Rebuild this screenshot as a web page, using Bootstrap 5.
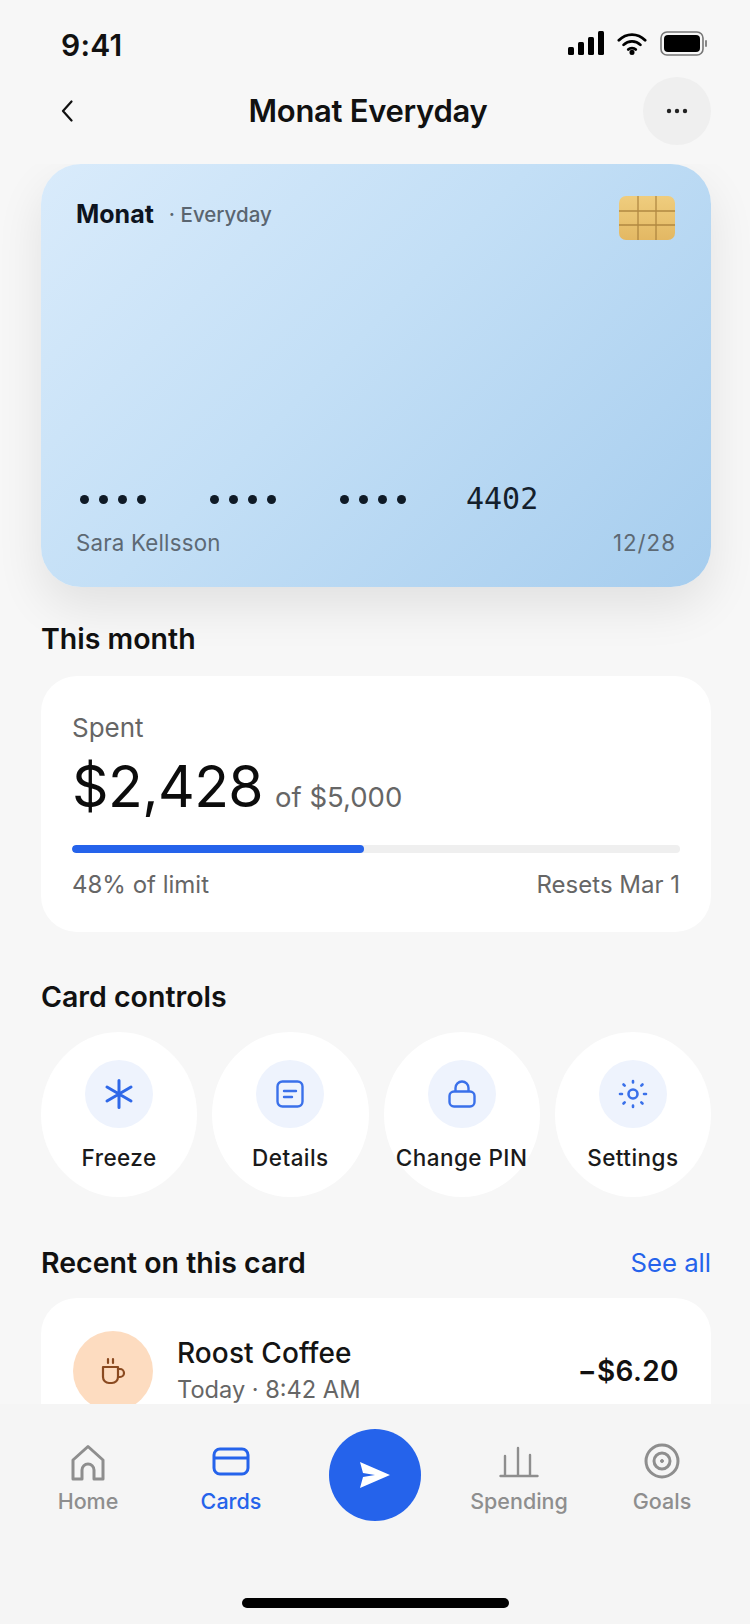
<!DOCTYPE html>
<html lang="en">
<head>
<meta charset="utf-8">
<title>Monat Everyday</title>
<link href="https://cdn.jsdelivr.net/npm/bootstrap@5.3.0/dist/css/bootstrap.min.css" rel="stylesheet">
<style>
html,body{height:100%;margin:0}
body{background:#f7f7f7;font-family:Inter,"Liberation Sans",sans-serif;color:#111;overflow:hidden}
.phone{width:750px;height:1624px;overflow:hidden}
.statusbar{height:77px;padding:29px 42px 0 61px;align-items:flex-start;flex:none}
.clock{font-size:30px;font-weight:600;line-height:32px;letter-spacing:.2px}
.statusicons{gap:13px;height:28px}
.topnav{height:68px;padding:0 39px 0 61px;margin-bottom:19px;flex:none}
.navtitle{font-size:31px;font-weight:600;letter-spacing:-.3px;line-height:40px;left:0;right:14px;text-align:center}
.morebtn{width:68px;height:68px;background:#efefef;z-index:1}
.content{flex:1 1 auto;min-height:0;overflow:hidden;padding:0 39px 0 41px}
.paycard{height:423px;border-radius:40px;background:linear-gradient(135deg,#d9ebfb 0%,#c3dff6 45%,#a6cdee 100%);box-shadow:0 20px 48px rgba(0,0,0,.09);padding:32px 36px 30px 35px;border:0}
.brandrow{height:38px}
.brand{font-size:25px;font-weight:700;color:#0d1420}
.brandsub{font-size:20.5px;color:#5a6570;margin-left:15px;font-weight:500}
.cardnum{font-family:"DejaVu Sans Mono","Liberation Mono",monospace;font-size:30px;line-height:36px;color:#14202c}
.dotset{gap:10px;width:130px}
.dotset.firstset{margin-left:4px}
.dotset.lastset{width:126px}
.dotset i{width:9px;height:9px;background:#0f1a26;border-radius:50%;display:block}
.cardmeta{font-size:22.3px;color:#5d6974;margin-top:12px;line-height:28px;letter-spacing:.2px}
.expiry{letter-spacing:1px;margin-right:-1px}
.sectionhead{font-size:28.5px;font-weight:600;line-height:34px;margin:0}
.whitecard{background:#fff;border:0;border-radius:36px}
.spentcard{padding:37px 31px 32px;height:256px;margin-top:20px}
.spentlabel{font-size:26px;color:#666;line-height:30px}
.bigamount{font-size:57px;line-height:70px;font-weight:400;color:#0c0c0c;letter-spacing:-.6px;margin-top:9px}
.ofamount{font-size:27.5px;color:#666;margin-left:12px}
.limitbar{height:10px;background:#efefef;border-radius:5px;margin-top:23px}
.limitbar .progress-bar{background:#2563eb;border-radius:5px}
.limitmeta{font-size:24px;color:#666;line-height:30px;margin-top:17px}
.ctrlrow{gap:15px;margin-top:18px}
.ctrl{flex:1 1 0;height:165px;background:#fff;border-radius:50%;padding-top:28px}
.ctrlicon{width:68px;height:68px;background:#eef3fd}
.ctrllabel{font-size:22.5px;font-weight:500;line-height:28px;margin-top:16px;color:#1a1a1a;white-space:nowrap;letter-spacing:.45px}
.seeall{font-size:25.7px;color:#2563eb;text-decoration:none;line-height:34px}
.txcard{padding:33px 32px 32px 32px;margin-top:18px;border-radius:36px}
.txicon{width:80px;height:80px;background:#fddcc0;flex:none}
.txtext{margin-left:24px;padding-bottom:2px}
.txname{font-size:28px;font-weight:500;line-height:36px;color:#141414;letter-spacing:.1px}
.txtime{font-size:23.6px;color:#666;line-height:32px;margin-top:3px}
.txamount{font-size:28px;font-weight:600;color:#111;letter-spacing:.4px}
.tabbar{height:220px;background:#f5f5f5;flex:none;padding-top:25px}
.tabrow{padding:0 30px;height:92px}
.tabitem{width:116px;height:92px;padding-top:14px;color:#8e8e8e;font-size:21.5px;font-weight:500;line-height:26px;text-decoration:none}
.tabitem.current{color:#2563eb}
.tabsvg{height:38px;margin-bottom:7px}
.sendbtn{width:92px;height:92px;background:#2563eb;flex:none;border:0;padding:0}
.tabslot{gap:27px}
.homebar{width:267px;height:10px;background:#000;border-radius:5px;margin:77px auto 0}
</style>
</head>
<body>
<div class="phone d-flex flex-column">
  <div class="statusbar d-flex justify-content-between">
    <span class="clock">9:41</span>
    <div class="statusicons d-flex align-items-center">
      <svg width="36" height="24" viewBox="0 0 36 24"><rect x="0" y="16" width="6" height="8" rx="1.5" fill="#000"/><rect x="10" y="11" width="6" height="13" rx="1.5" fill="#000"/><rect x="20" y="6" width="6" height="18" rx="1.5" fill="#000"/><rect x="30" y="0" width="6" height="24" rx="1.5" fill="#000"/></svg>
      <svg width="30" height="24" viewBox="0 0 32 24" fill="none" stroke="#000" stroke-width="3" stroke-linecap="round"><path d="M2 9C10 1 22 1 30 9"/><path d="M7 14C12 9 20 9 25 14"/><path d="M12 19C14 17 18 17 20 19"/><circle cx="16" cy="22" r="1.2" fill="#000"/></svg>
      <svg width="48" height="25" viewBox="0 0 48 25"><rect x="1" y="1" width="42" height="23" rx="6" fill="none" stroke="#777" stroke-width="1.6"/><rect x="4" y="4" width="36" height="17" rx="4" fill="#000"/><rect x="45" y="9" width="2" height="7" rx="1" fill="#888"/></svg>
    </div>
  </div>
  <div class="topnav d-flex align-items-center justify-content-between position-relative">
    <svg width="12" height="22" viewBox="0 0 12 22" fill="none" stroke="#111" stroke-width="2.2" stroke-linecap="round" stroke-linejoin="round"><path d="M10.5 1.5 2 11l8.500 9.500"/></svg>
    <div class="navtitle position-absolute">Monat Everyday</div>
    <button class="morebtn btn rounded-circle border-0 p-0 d-flex align-items-center justify-content-center" type="button" aria-label="More">
      <svg width="22" height="6" viewBox="0 0 22 6" fill="#222"><circle cx="3" cy="3" r="2.2"/><circle cx="11" cy="3" r="2.2"/><circle cx="19" cy="3" r="2.2"/></svg>
    </button>
  </div>
  <div class="content">
    <div class="paycard card d-flex flex-column">
      <div class="d-flex justify-content-between align-items-start">
        <div class="brandrow d-flex align-items-center"><span class="brand">Monat</span><span class="brandsub">· Everyday</span></div>
        <svg width="56" height="44" viewBox="0 0 56 44"><defs><linearGradient id="chipg" x1="0" y1="0" x2="0" y2="1"><stop offset="0" stop-color="#efcd7e"/><stop offset="1" stop-color="#e3b863"/></linearGradient></defs><rect width="56" height="44" rx="7" fill="url(#chipg)"/><path d="M19 0v44M37 0v44M0 15h56M0 29h56" stroke="#a87f3a" stroke-width="1.3" opacity=".85"/></svg>
      </div>
      <div class="mt-auto">
        <div class="cardnum d-flex align-items-center">
          <div class="dotset firstset d-flex align-items-center"><i></i><i></i><i></i><i></i></div>
          <div class="dotset d-flex align-items-center"><i></i><i></i><i></i><i></i></div>
          <div class="dotset lastset d-flex align-items-center"><i></i><i></i><i></i><i></i></div>
          <span>4402</span>
        </div>
        <div class="cardmeta d-flex justify-content-between"><span>Sara Kellsson</span><span class="expiry">12/28</span></div>
      </div>
    </div>

    <h2 class="sectionhead" style="margin-top:35px">This month</h2>
    <div class="whitecard spentcard card">
      <div class="spentlabel">Spent</div>
      <div class="d-flex align-items-baseline"><span class="bigamount">$2,428</span><span class="ofamount">of $5,000</span></div>
      <div class="progress limitbar"><div class="progress-bar" style="width:48%"></div></div>
      <div class="limitmeta d-flex justify-content-between"><span>48% of limit</span><span>Resets Mar 1</span></div>
    </div>

    <h2 class="sectionhead" style="margin-top:48px">Card controls</h2>
    <div class="ctrlrow d-flex">
      <div class="ctrl d-flex flex-column align-items-center">
        <div class="ctrlicon rounded-circle d-flex align-items-center justify-content-center">
          <svg width="30" height="30" viewBox="0 0 30 30" fill="none" stroke="#2f68e8" stroke-width="3" stroke-linecap="round"><path d="M15 1.500v27M3 8l24 14M27 8 3 22"/></svg>
        </div>
        <div class="ctrllabel">Freeze</div>
      </div>
      <div class="ctrl d-flex flex-column align-items-center">
        <div class="ctrlicon rounded-circle d-flex align-items-center justify-content-center">
          <svg width="28" height="28" viewBox="0 0 28 28" fill="none" stroke="#3a70ea" stroke-width="2.4" stroke-linecap="round"><rect x="1.500" y="1.500" width="25" height="25" rx="5"/><path d="M8 11h12M8 17h8"/></svg>
        </div>
        <div class="ctrllabel">Details</div>
      </div>
      <div class="ctrl d-flex flex-column align-items-center">
        <div class="ctrlicon rounded-circle d-flex align-items-center justify-content-center">
          <svg width="28" height="28" viewBox="0 0 28 28" fill="none" stroke="#3a70ea" stroke-width="2.4"><rect x="1.500" y="11.500" width="25" height="15" rx="4.500"/><path d="M7.500 11.500V8a6.500 6.500 0 0 1 13 0v3.500"/></svg>
        </div>
        <div class="ctrllabel">Change PIN</div>
      </div>
      <div class="ctrl d-flex flex-column align-items-center">
        <div class="ctrlicon rounded-circle d-flex align-items-center justify-content-center">
          <svg width="30" height="30" viewBox="0 0 30 30" fill="none" stroke="#3a70ea" stroke-width="2.600" stroke-linecap="round"><circle cx="15" cy="15" r="4.500"/><path d="M15 2v1.500M15 26.500V28M2 15h2M26 15h2M5.500 5.500l1.200 1.200M23.300 23.300l1.200 1.200M24.500 5.500 23.300 6.700M6.700 23.300l-1.200 1.200"/></svg>
        </div>
        <div class="ctrllabel">Settings</div>
      </div>
    </div>

    <div class="d-flex justify-content-between align-items-center" style="margin-top:49px">
      <h2 class="sectionhead">Recent on this card</h2>
      <a href="#" class="seeall">See all</a>
    </div>
    <div class="whitecard txcard card d-flex flex-row align-items-center">
      <div class="txicon rounded-circle d-flex align-items-center justify-content-center">
        <svg width="26" height="28" viewBox="0 0 26 28" fill="none" stroke="#8a4a20" stroke-width="2.2" stroke-linecap="round" stroke-linejoin="round"><path d="M3 10h15v10a6 6 0 0 1-6 6H9a6 6 0 0 1-6-6z"/><path d="M18 12h2a4 4 0 0 1 0 8h-2"/><path d="M8 2v4M13 2v4"/></svg>
      </div>
      <div class="txtext flex-grow-1">
        <div class="txname">Roost Coffee</div>
        <div class="txtime">Today · 8:42 AM</div>
      </div>
      <div class="txamount">−$6.20</div>
    </div>
  </div>
  <div class="tabbar">
    <div class="tabrow d-flex justify-content-between">
      <div class="d-flex tabslot">
        <a href="#" class="tabitem d-flex flex-column align-items-center">
          <div class="tabsvg"><svg width="36" height="38" viewBox="0 0 36 38" fill="none" stroke="#8e8e8e" stroke-width="3" stroke-linejoin="round"><path d="M3 36V17L18 3.500 33 17v19H24V27a6 6 0 0 0-12 0v9z"/></svg></div>
          <span>Home</span>
        </a>
        <a href="#" class="tabitem current d-flex flex-column align-items-center">
          <div class="tabsvg"><svg width="38" height="38" viewBox="0 0 38 38" fill="none" stroke="#2563eb" stroke-width="3"><rect x="2" y="6" width="34" height="25" rx="6"/><path d="M2 15h34"/></svg></div>
          <span>Cards</span>
        </a>
      </div>
      <button class="sendbtn btn rounded-circle d-flex align-items-center justify-content-center" type="button" aria-label="Send">
        <svg width="32" height="28" viewBox="0 0 32 28" fill="#fff"><path d="M1 1 31 14 1 27l3-11 12-2-12-2z"/></svg>
      </button>
      <div class="d-flex tabslot">
        <a href="#" class="tabitem d-flex flex-column align-items-center">
          <div class="tabsvg"><svg width="40" height="38" viewBox="0 0 40 38" fill="none" stroke="#8e8e8e" stroke-width="2.400" stroke-linecap="round"><path d="M1.500 33h37M6 33V13M19 33V5M31 33V12"/></svg></div>
          <span>Spending</span>
        </a>
        <a href="#" class="tabitem d-flex flex-column align-items-center">
          <div class="tabsvg"><svg width="36" height="36" viewBox="0 0 36 36" fill="none" stroke="#8e8e8e" stroke-width="3"><circle cx="18" cy="18" r="16"/><circle cx="18" cy="18" r="8"/><circle cx="18" cy="18" r="1.500" fill="#8e8e8e" stroke-width="1"/></svg></div>
          <span>Goals</span>
        </a>
      </div>
    </div>
    <div class="homebar"></div>
  </div>
</div>
<script src="https://cdn.jsdelivr.net/npm/bootstrap@5.3.0/dist/js/bootstrap.bundle.min.js"></script>
</body>
</html>
